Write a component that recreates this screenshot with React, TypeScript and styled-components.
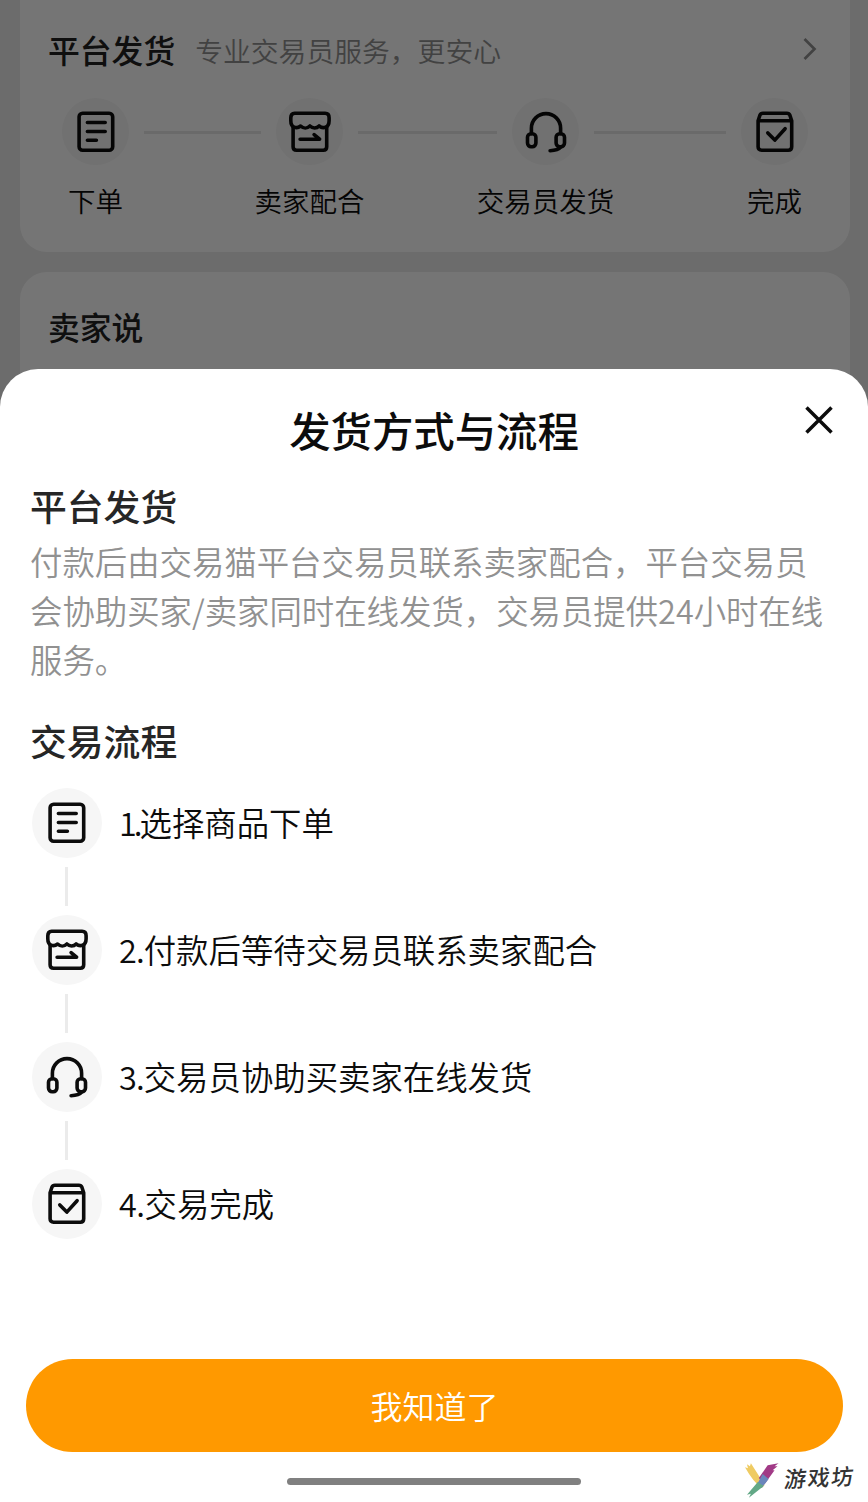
import React from 'react';
import styled, { createGlobalStyle } from 'styled-components';

const GlobalStyle = createGlobalStyle`
  * { box-sizing: border-box; }
  body { margin: 0; background: #fff; }
  h1, h2, h3, p, ol { margin: 0; padding: 0; }
  button { border: 0; padding: 0; background: none; font: inherit; }
`;

const Screen = styled.main`
  position: relative;
  width: 868px;
  height: 1502px;
  overflow: hidden;
  background: #ebebeb;
  font-family: 'Noto Sans CJK SC', sans-serif;
  font-weight: 350;
  color: #0c0c0c;
`;

const Page = styled.div`
  display: flex;
  flex-direction: column;
  gap: 20px;
  padding: 0 18px 0 20px;
`;

const Card = styled.section<{ $first?: boolean }>`
  height: ${(p) => (p.$first ? 252 : 240)}px;
  padding: ${(p) => (p.$first ? '25px' : '30px')} 28px 0;
  border-radius: ${(p) => (p.$first ? '0 0 27px 27px' : '27px')};
  background: #fff;
`;

const CardHeader = styled.header`
  display: flex;
  align-items: center;
  height: 48px;
`;

const CardTitle = styled.h3`
  font-size: 31.8px;
  line-height: 48px;
  font-weight: 500;
  color: #222;
`;

const CardHint = styled.span`
  flex: 1;
  margin: 2px 0 0 20px;
  font-size: 27.8px;
  line-height: 48px;
  color: #919191;
`;

const StepBar = styled.div`
  display: flex;
  align-items: flex-start;
  margin: 25px 14px 0;
`;

const BarStep = styled.div`
  display: flex;
  flex-direction: column;
  align-items: center;
  width: 67px;
  flex: none;
`;

const BarLabel = styled.span`
  margin-top: 15px;
  font-size: 27.5px;
  line-height: 40px;
  white-space: nowrap;
`;

const BarLine = styled.i<{ $span: number }>`
  flex: ${(p) => p.$span} 1 0;
  height: 3px;
  margin: 33px 15px 0;
  background: #e6e6e6;
`;

const Disc = styled.span<{ $size: number }>`
  display: flex;
  flex: none;
  align-items: center;
  justify-content: center;
  width: ${(p) => p.$size}px;
  height: ${(p) => p.$size}px;
  border-radius: 50%;
  background: #f6f6f6;
`;

const Mask = styled.div`
  position: absolute;
  inset: 0;
  background: rgba(0, 0, 0, 0.541);
`;

const Sheet = styled.section`
  position: absolute;
  left: 0;
  right: 0;
  bottom: 0;
  height: 1133px;
  display: flex;
  flex-direction: column;
  border-radius: 38px 38px 0 0;
  background: #fff;
`;

const SheetHeader = styled.header`
  display: grid;
  grid-template-columns: 100px 1fr 100px;
  height: 105px;
`;

const SheetTitle = styled.h1`
  grid-column: 2;
  padding-top: 30px;
  text-align: center;
  font-size: 41.4px;
  line-height: 60px;
  font-weight: 500;
`;

const CloseButton = styled.button`
  display: flex;
  width: 28px;
  height: 28px;
  margin: 37px 0 0 37px;
`;

const SheetBody = styled.div`
  flex: 1;
  padding: 0 30px;
`;

const SectionTitle = styled.h2<{ $spaced?: boolean }>`
  margin-top: ${(p) => (p.$spaced ? 30 : 4)}px;
  font-size: 36.8px;
  line-height: 54px;
  font-weight: 500;
  color: #262626;
`;

const Description = styled.p`
  margin-top: 4px;
  font-size: 32.4px;
  line-height: 49px;
  white-space: nowrap;
  color: #919191;
`;

const Steps = styled.ol`
  margin: 21px 0 0 2px;
  list-style: none;
`;

const StepRow = styled.li`
  display: flex;
  align-items: center;
  height: 70px;
`;

const StepText = styled.span`
  display: flex;
  margin: 0 0 3px 17px;
  font-size: 32.4px;
  line-height: 48px;
  white-space: nowrap;
`;

const StepNumber = styled.span<{ $tighten: number }>`
  letter-spacing: -${(p) => p.$tighten}px;
`;

const StepLink = styled.li`
  width: 3px;
  height: 39px;
  margin: 9px 0 9px 32.5px;
  background: #ebebeb;
`;

const Confirm = styled.button`
  flex: none;
  height: 93px;
  margin: 0 25px 0 26px;
  border-radius: 47px;
  background: #ff9900;
  color: #fff;
  font-size: 32px;
  line-height: 93px;
`;

const SheetFooter = styled.footer`
  display: flex;
  flex: none;
  justify-content: flex-end;
  height: 50px;
  padding-right: 13px;
`;

const HomeBar = styled.i`
  width: 294px;
  height: 7px;
  margin: 26px 163px 0 0;
  border-radius: 4px;
  background: #808080;
`;

const Brand = styled.div`
  display: flex;
  width: 111px;
  gap: 5px;
  margin-top: 9px;
`;

const BrandName = styled.span`
  font-size: 22px;
  line-height: 30px;
  font-weight: 500;
  letter-spacing: 1.5px;
  white-space: nowrap;
  color: #333;
  transform: skew(-6deg, -3deg);
`;

type IconName = 'order' | 'shop' | 'headset' | 'done';

const Icon = ({ name }: { name: IconName }) => (
  <svg width="42" height="42" viewBox="0.4 0.3 42 42" fill="none" stroke="#0c0c0c" strokeWidth="3.6" strokeLinecap="round" strokeLinejoin="round">
    {name === 'order' && (
      <>
        <rect x="4.500" y="2.500" width="33.600" height="37" rx="3.500" />
        <path d="M12.800 11.800h17.800M12.800 20.800h17.800M12.800 29.600h9" />
      </>
    )}
    {name === 'shop' && (
      <>
        <path d="M6 2.500h30.500q4 0 4 4.500v3c0 7-6 8.500-10 5.300-2.500 2.600-6.500 2.600-9.200 0-2.600 2.600-6.600 2.600-9.300 0C8 18.500 2.200 17 2.200 10V7q0-4.500 3.800-4.500z" />
        <path d="M4.500 16.500V36q0 3.500 3.500 3.500h26.600q3.500 0 3.500-3.500V16.500" />
        <path d="M11.500 28.500h19.500l-5.500-4.500" />
      </>
    )}
    {name === 'headset' && (
      <>
        <path d="M6.800 23v-5.500a14.600 14.600 0 0 1 29.200 0V23" />
        <rect x="2.900" y="23" width="8.400" height="13" rx="3.600" />
        <rect x="31.500" y="23" width="8.400" height="13" rx="3.600" />
        <path d="M36 36.500q-2.500 3.300-10.500 3.500" />
      </>
    )}
    {name === 'done' && (
      <>
        <path d="M4.500 10 6.300 4.500q.8-2 3-2h24q2.200 0 3 2l1.800 5.500V36q0 3.500-3.500 3.500H8q-3.500 0-3.500-3.500zM4.500 10h33.600" />
        <path d="m14.200 22.200 7 7.200L31.500 18" />
      </>
    )}
  </svg>
);

const Chevron = () => (
  <svg width="21" height="24" viewBox="0 0 21 24" fill="none" stroke="#919191" strokeWidth="2.700">
    <path d="m3.500 2 10 10-10 10" />
  </svg>
);

const Cross = () => (
  <svg width="28" height="28" viewBox="0 0 28 28" stroke="#0c0c0c" strokeWidth="3.500">
    <path d="m1.500 1.500 25 25M26.500 1.500l-25 25" />
  </svg>
);

const BrandMark = () => (
  <svg width="36" height="38" viewBox="0 0 36 38">
    <path d="m1 6 3 1-1-4 3 2 1-3 14 22-3 3q-8-5-17-21z" fill="#efcb62" />
    <path d="M35 2 24 4 15 17l6 6L31 9l-2 0 5-4-3 0z" fill="#a13a86" />
    <path d="m19 13-5 9 4 5 7-9z" fill="#6a86bb" />
    <path d="M14 21 3 34l4-1-2 4 15-12z" fill="#62a886" />
  </svg>
);

const barSteps: { icon: IconName; label: string; line?: number }[] = [
  { icon: 'order', label: '下单', line: 117 },
  { icon: 'shop', label: '卖家配合', line: 139 },
  { icon: 'headset', label: '交易员发货', line: 132 },
  { icon: 'done', label: '完成' },
];

const steps: { icon: IconName; label: string; tighten: number }[] = [
  { icon: 'order', label: '选择商品下单', tighten: 3 },
  { icon: 'shop', label: '付款后等待交易员联系卖家配合', tighten: 0.9 },
  { icon: 'headset', label: '交易员协助买卖家在线发货', tighten: 0.9 },
  { icon: 'done', label: '交易完成', tighten: 0.5 },
];

export default function App() {
  return (
    <Screen>
      <GlobalStyle />
      <Page>
        <Card $first>
          <CardHeader>
            <CardTitle>平台发货</CardTitle>
            <CardHint>专业交易员服务，更安心</CardHint>
            <Chevron />
          </CardHeader>
          <StepBar>
            {barSteps.map((s) => (
              <React.Fragment key={s.label}>
                <BarStep>
                  <Disc $size={67}><Icon name={s.icon} /></Disc>
                  <BarLabel>{s.label}</BarLabel>
                </BarStep>
                {s.line && <BarLine $span={s.line} />}
              </React.Fragment>
            ))}
          </StepBar>
        </Card>
        <Card>
          <CardTitle>卖家说</CardTitle>
        </Card>
      </Page>
      <Mask />
      <Sheet>
        <SheetHeader>
          <SheetTitle>发货方式与流程</SheetTitle>
          <CloseButton aria-label="关闭"><Cross /></CloseButton>
        </SheetHeader>
        <SheetBody>
          <SectionTitle>平台发货</SectionTitle>
          <Description>
            付款后由交易猫平台交易员联系卖家配合，平台交易员<br />
            会协助买家/卖家同时在线发货，交易员提供24小时在线<br />
            服务。
          </Description>
          <SectionTitle $spaced>交易流程</SectionTitle>
          <Steps>
            {steps.map((s, i) => (
              <React.Fragment key={s.label}>
                {i > 0 && <StepLink aria-hidden />}
                <StepRow>
                  <Disc $size={70}><Icon name={s.icon} /></Disc>
                  <StepText>
                    <StepNumber $tighten={s.tighten}>{i + 1}.</StepNumber>
                    {s.label}
                  </StepText>
                </StepRow>
              </React.Fragment>
            ))}
          </Steps>
        </SheetBody>
        <Confirm>我知道了</Confirm>
        <SheetFooter>
          <HomeBar />
          <Brand>
            <BrandMark />
            <BrandName>游戏坊</BrandName>
          </Brand>
        </SheetFooter>
      </Sheet>
    </Screen>
  );
}
